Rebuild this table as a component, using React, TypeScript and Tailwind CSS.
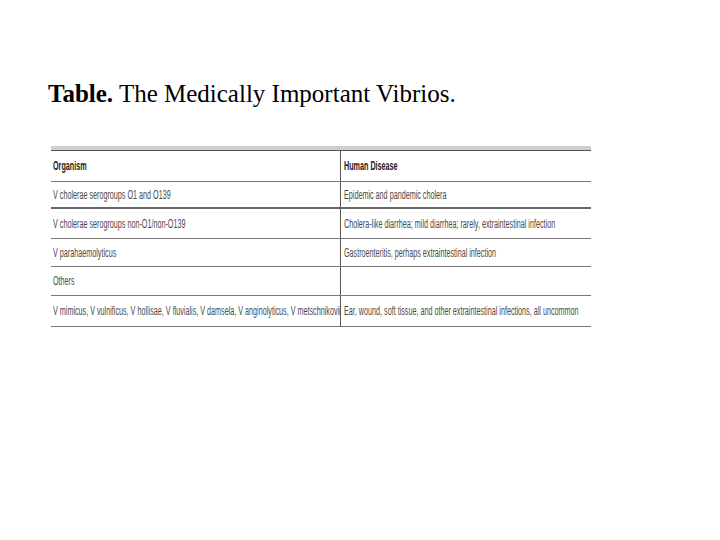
import React from "react";

const rows: [string, string][] = [
  ["V cholerae serogroups O1 and O139", "Epidemic and pandemic cholera"],
  ["V cholerae serogroups non-O1/non-O139", "Cholera-like diarrhea; mild diarrhea; rarely, extraintestinal infection"],
  ["V parahaemolyticus", "Gastroenteritis, perhaps extraintestinal infection"],
  ["Others", ""],
  [
    "V mimicus, V vulnificus, V hollisae, V fluvialis, V damsela, V anginolyticus, V metschnikovii",
    "Ear, wound, soft tissue, and other extraintestinal infections, all uncommon",
  ],
];

const heights = ["h-[27px]", "h-[30px]", "h-[28px]", "h-[29px]", "h-[31px]"];

const Cell = ({ text, bold }: { text: string; bold?: boolean }) => (
  <span
    className={`block origin-left scale-x-[0.6] whitespace-nowrap text-[12px] ${bold ? "font-bold text-[#222]" : "text-[#4a4a4a]"}`}
    style={{ fontFamily: '"Liberation Sans", Arial, sans-serif' }}
  >
    {text}
  </span>
);

export default function App() {
  return (
    <div className="w-[720px] h-[540px] bg-white relative overflow-hidden">
      <p className="pl-[48px] pt-[79px] text-[25px] leading-[29px] text-black" style={{ fontFamily: '"Liberation Serif", "Times New Roman", serif' }}>
        <b>Table.</b> The Medically Important Vibrios.
      </p>
      <div className="ml-[51px] mt-[38px] w-[540px]">
        <div className="h-[4px] bg-[#cfcfcf]" />
        <div className="h-[1px] bg-[#555]" />
        <div className="flex h-[31px] border-b border-[#777]">
          <div className="w-[290px] shrink-0 flex items-center pl-[2px] border-r border-[#555]">
            <Cell text="Organism" bold />
          </div>
          <div className="flex-1 flex items-center pl-[3px]">
            <Cell text="Human Disease" bold />
          </div>
        </div>
        {rows.map(([a, b], i) => (
          <div key={i} className={`flex ${heights[i]} border-b ${i === 0 ? "border-b-2 border-[#666]" : "border-[#777]"}`}>
            <div className="w-[290px] shrink-0 flex items-center pl-[2px] border-r border-[#555]">
              <Cell text={a} />
            </div>
            <div className="flex-1 flex items-center pl-[3px]">
              <Cell text={b} />
            </div>
          </div>
        ))}
      </div>
    </div>
  );
}
